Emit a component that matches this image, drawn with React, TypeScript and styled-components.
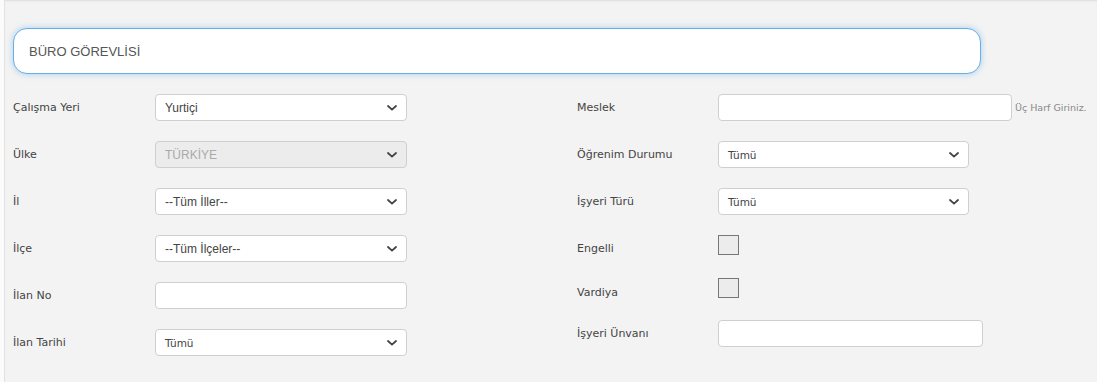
import React from "react";
import styled, { createGlobalStyle } from "styled-components";

const GlobalStyle = createGlobalStyle`
  html, body {
    margin: 0;
    padding: 0;
    background: #fbfbfb;
  }
  #root {
    height: 382px;
    overflow: hidden;
  }
`;

const Chevron = () => (
  <ChevronSvg viewBox="0 0 10 6" width="10" height="6">
    <path d="M1 1 L5 4.6 L9 1" fill="none" stroke="currentColor" strokeWidth="1.8" strokeLinecap="round" />
  </ChevronSvg>
);

type SelectProps = {
  value: string;
  width: number;
  disabled?: boolean;
  wide?: boolean;
};

const SelectField = ({ value, width, disabled, wide }: SelectProps) => (
  <SelectBox $width={width} $disabled={disabled}>
    <SelectText $wide={wide}>{value}</SelectText>
    <Chevron />
  </SelectBox>
);

const App = () => {
  return (
    <>
      <GlobalStyle />
      <Panel>
        <TitleBox>BÜRO GÖREVLİSİ</TitleBox>
        <Columns>
          <Column>
            <Row>
              <Label>Çalışma Yeri</Label>
              <SelectField value="Yurtiçi" width={252} />
            </Row>
            <Row>
              <Label>Ülke</Label>
              <SelectField value="TÜRKİYE" width={252} disabled />
            </Row>
            <Row>
              <Label>İl</Label>
              <SelectField value="--Tüm İller--" width={252} />
            </Row>
            <Row>
              <Label>İlçe</Label>
              <SelectField value="--Tüm İlçeler--" width={252} />
            </Row>
            <Row>
              <Label>İlan No</Label>
              <TextInput $width={252} />
            </Row>
            <Row>
              <Label>İlan Tarihi</Label>
              <SelectField value="Tümü" width={252} wide />
            </Row>
          </Column>
          <Column>
            <Row>
              <Label $width={141}>Meslek</Label>
              <TextInput $width={294} />
              <Hint>Üç Harf Giriniz.</Hint>
            </Row>
            <Row>
              <Label $width={141}>Öğrenim Durumu</Label>
              <SelectField value="Tümü" width={251} wide />
            </Row>
            <Row>
              <Label $width={141}>İşyeri Türü</Label>
              <SelectField value="Tümü" width={251} wide />
            </Row>
            <CheckRow>
              <Label $width={141} $shift={3}>Engelli</Label>
              <CheckBox />
            </CheckRow>
            <CheckRow $top={23}>
              <Label $width={141} $shift={4}>Vardiya</Label>
              <CheckBox />
            </CheckRow>
            <Row $top={22}>
              <Label $width={141}>İşyeri Ünvanı</Label>
              <TextInput $width={265} />
            </Row>
          </Column>
        </Columns>
      </Panel>
    </>
  );
};

export default App;

const Panel = styled.div`
  margin-left: 4px;
  height: 382px;
  box-sizing: border-box;
  padding: 28px 0 0 8px;
  background: #f3f3f3;
  border-left: 1px solid #e2e2e2;
  box-shadow: inset 0 2px 2px -1px #dcdcdc;
`;

const TitleBox = styled.div`
  width: 968px;
  height: 46px;
  box-sizing: border-box;
  display: flex;
  align-items: center;
  padding-left: 15px;
  background: #fff;
  border: 1px solid #66afe9;
  border-radius: 14px;
  box-shadow: 0 0 6px rgba(102, 175, 233, 0.55);
  font-family: "Liberation Sans", Arial, sans-serif;
  font-size: 13px;
  color: #555;
`;

const Columns = styled.div`
  display: grid;
  grid-template-columns: 564px 1fr;
  margin-top: 20px;
`;

const Column = styled.div`
  display: flex;
  flex-direction: column;
`;

const Row = styled.div<{ $top?: number }>`
  display: flex;
  align-items: center;
  height: 27px;
  margin-top: ${(p) => (p.$top ?? 20)}px;
  &:first-child {
    margin-top: 0;
  }
`;

const CheckRow = styled.div<{ $top?: number }>`
  display: flex;
  align-items: center;
  height: 20px;
  margin-top: ${(p) => (p.$top ?? 20)}px;
`;

const Label = styled.div<{ $shift?: number; $width?: number }>`
  width: ${(p) => p.$width ?? 142}px;
  flex-shrink: 0;
  font-family: "DejaVu Sans", Verdana, sans-serif;
  font-size: 11px;
  color: #444;
  position: relative;
  top: ${(p) => p.$shift ?? 0}px;
`;

const SelectBox = styled.div<{ $width: number; $disabled?: boolean }>`
  width: ${(p) => p.$width}px;
  height: 27px;
  box-sizing: border-box;
  display: flex;
  align-items: center;
  justify-content: space-between;
  padding: 0 9px 0 9px;
  background: ${(p) => (p.$disabled ? "#ececec" : "#fff")};
  border: 1px solid #cfcfcf;
  border-radius: 4px;
  color: ${(p) => (p.$disabled ? "#aaa" : "#444")};
`;

const SelectText = styled.span<{ $wide?: boolean }>`
  font-family: ${(p) =>
    p.$wide ? `"DejaVu Sans", Verdana, sans-serif` : `"Liberation Sans", Arial, sans-serif`};
  font-size: ${(p) => (p.$wide ? "10.5px" : "12px")};
  color: inherit;
`;

const ChevronSvg = styled.svg`
  color: #444;
  flex-shrink: 0;
`;

const TextInput = styled.div<{ $width: number }>`
  width: ${(p) => p.$width}px;
  height: 27px;
  box-sizing: border-box;
  background: #fff;
  border: 1px solid #cfcfcf;
  border-radius: 4px;
`;

const Hint = styled.span`
  margin-left: 3px;
  font-family: "DejaVu Sans", Verdana, sans-serif;
  font-size: 9.5px;
  color: #888;
  white-space: nowrap;
`;

const CheckBox = styled.div`
  width: 21px;
  height: 20px;
  box-sizing: border-box;
  background: #ececec;
  border: 1px solid #777;
`;
